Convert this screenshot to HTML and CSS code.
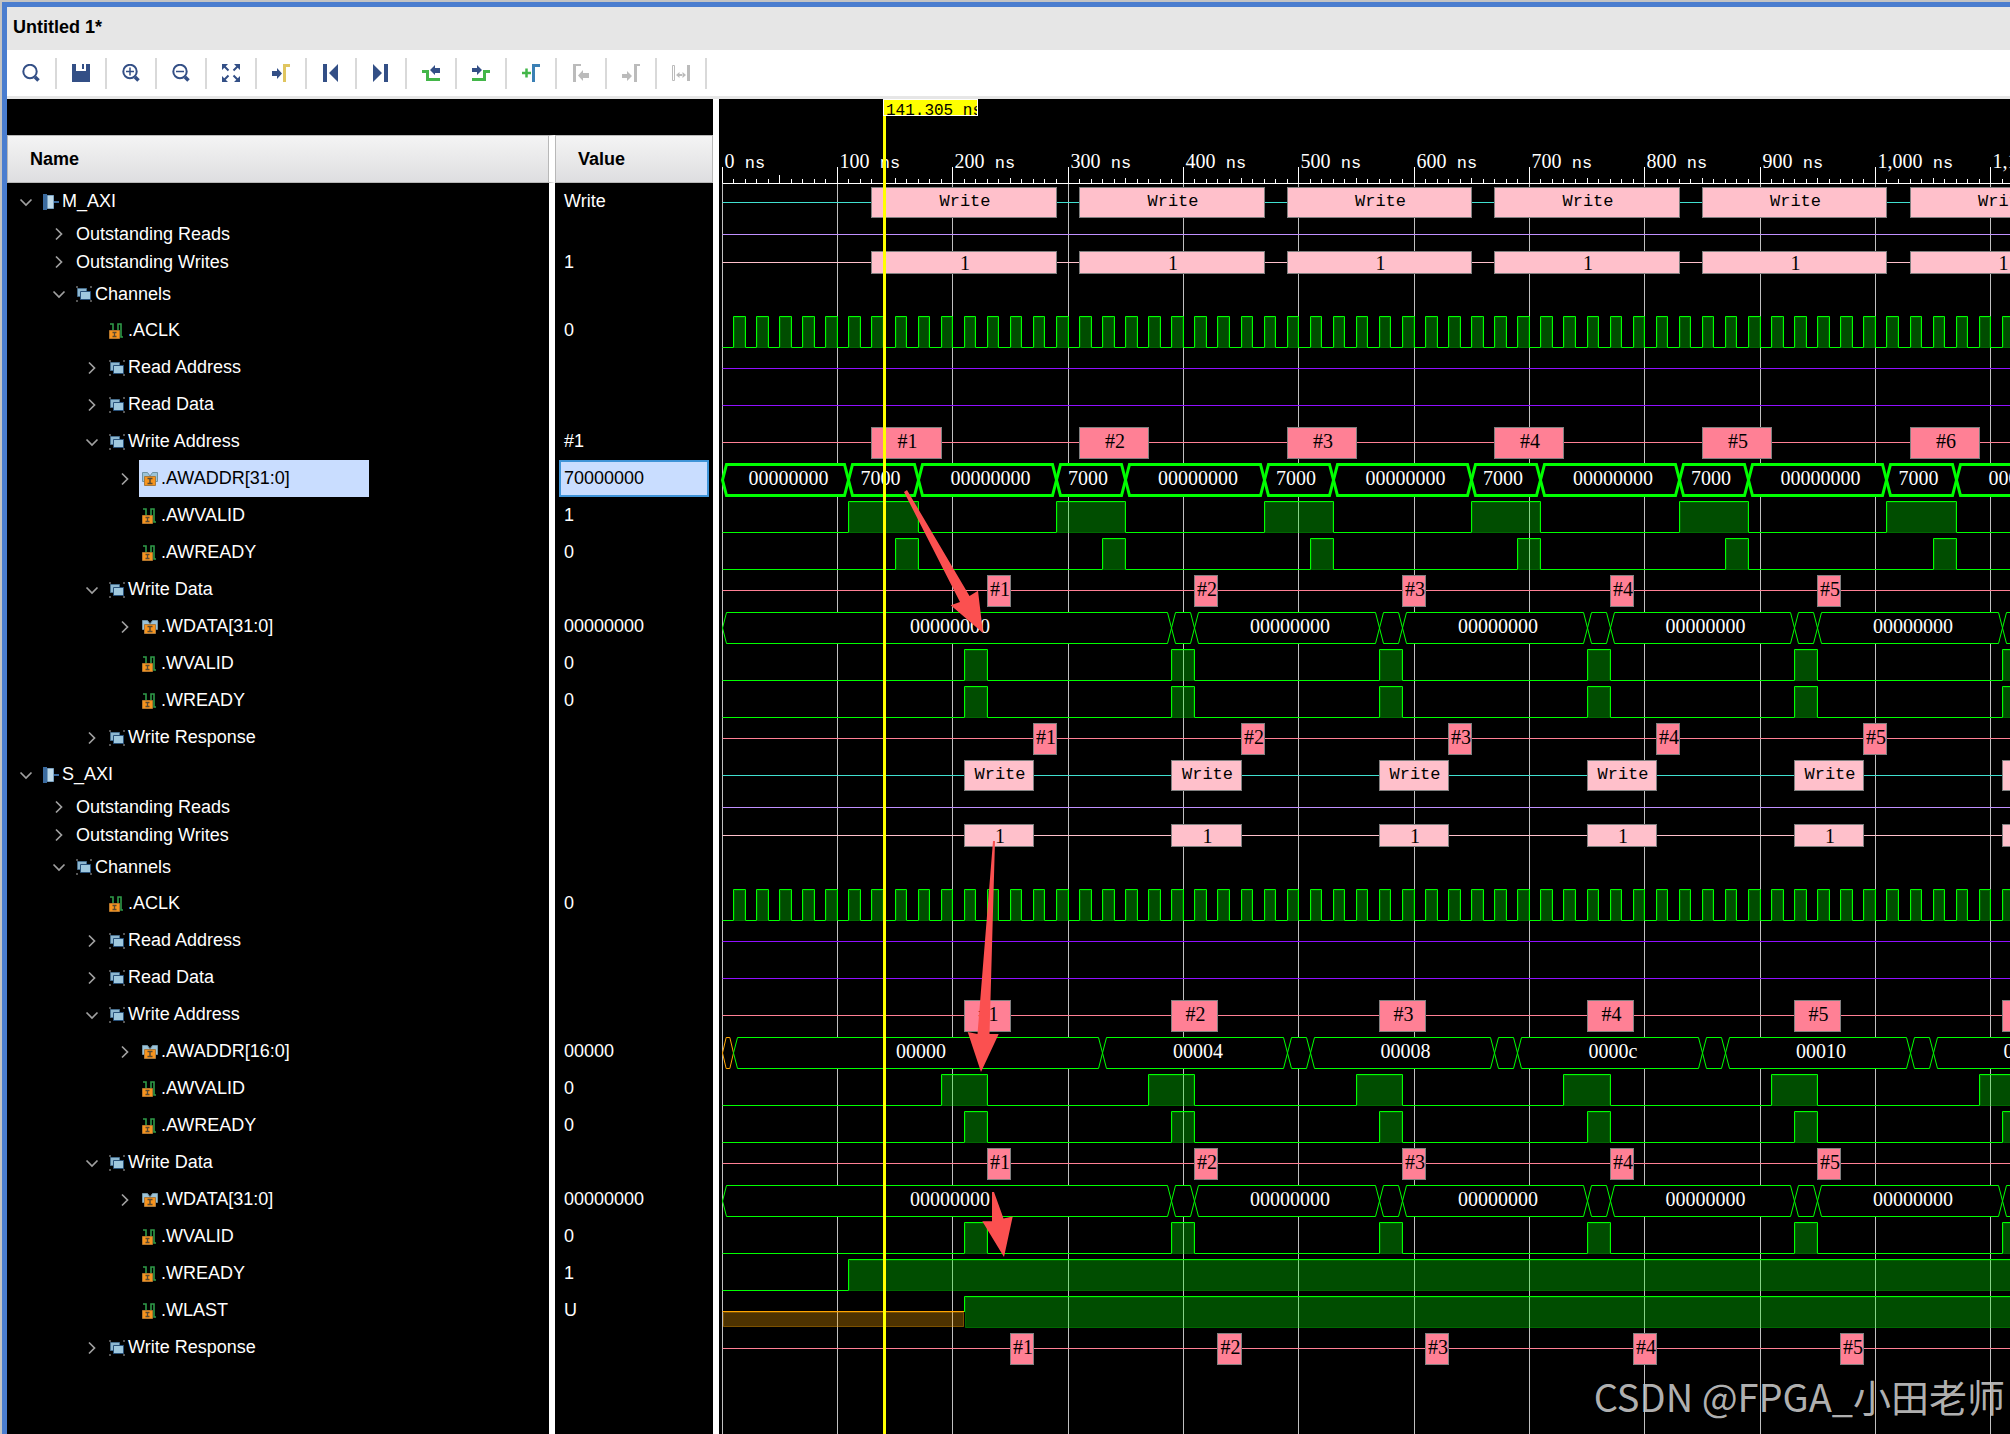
FILE: index.html
```html
<!DOCTYPE html>
<html lang="en">
<head>
    <meta charset="UTF-8">
    <title>Untitled 1*</title>
    <link rel="stylesheet" href="styles.css">
</head>
<body>
    <svg class="icon-defs" aria-hidden="true">
        <symbol id="down" viewBox="0 0 14 14"><path d="M1.5 4.5L7 10l5.5-5.5" fill="none" stroke="#a0a0a0" stroke-width="1.7"/></symbol>
        <symbol id="right" viewBox="0 0 14 14"><path d="M4 1.5L9.500 7 4 12.500" fill="none" stroke="#a0a0a0" stroke-width="1.700"/></symbol>
        <symbol id="iface" viewBox="0 0 16 16">
            <path d="M0 0h4v16H0zM11 7h5v2h-5z" fill="#3b6b9f"/>
            <path d="M4.500 1.500h6v13h-6z" fill="#bfdaea" stroke="#7ba3c4"/>
        </symbol>
        <symbol id="group" viewBox="0 0 16 16">
            <path d="M0 0h2v2H0zM14 0h2v2h-2zM0 14h2v2H0zM14 14h2v2h-2z" fill="#555"/>
            <path d="M1.500 2.500h9v8h-9z" fill="#8db7d0" stroke="#476f8e"/>
            <path d="M4.500 5.500h10v8h-10z" fill="#9fc8de" stroke="#28517a"/>
        </symbol>
        <symbol id="wire" viewBox="0 0 16 16">
            <path d="M1 1h3v7M4 8h5V1h3v13h2" fill="none" stroke="#2f9a48" stroke-width="1.600"/>
            <path d="M.5 7.500h10v8H.5z" fill="#f7941e" stroke="#b5762b"/>
            <path d="M3.500 9.500h4M5.500 9.500v4M3.500 13.500h4" stroke="#5b4a30" stroke-width="1.300"/>
        </symbol>
        <symbol id="bus" viewBox="0 0 16 16">
            <path d="M.5 1.500h5L8 5l2.500-3.500h5v9H.5z" fill="#9cc3d8" stroke="#6f93a5"/>
            <path d="M2.500 5.500h11v9h-11z" fill="#f7941e" stroke="#a87a3f"/>
            <path d="M5.500 7.500h5M8 7.500v5M5.500 12.500h5" stroke="#5b4a30" stroke-width="1.500"/>
        </symbol>
    </svg>

    <div class="window">
        <header class="title-bar">Untitled 1*</header>

        <div class="toolbar">
            <button class="tool" aria-label="Search">
                <svg viewBox="0 0 18 18"><circle cx="8" cy="7.500" r="6.700" fill="none" stroke="#334f86" stroke-width="2"/><path d="M13 13l3.500 3.500" stroke="#334f86" stroke-width="3.500"/></svg>
            </button>
            <button class="tool" aria-label="Save">
                <svg viewBox="0 0 18 18"><path d="M0 0h4v7h10V0h4v18H0z" fill="#334f86"/><path d="M10 0h2v5h-2z" fill="#334f86"/></svg>
            </button>
            <button class="tool" aria-label="Zoom in">
                <svg viewBox="0 0 18 18"><circle cx="8" cy="7.500" r="6.700" fill="none" stroke="#334f86" stroke-width="2"/><path d="M4 7.500h8M8 3.500v8" stroke="#334f86" stroke-width="1.500"/><path d="M13 13l3.500 3.500" stroke="#334f86" stroke-width="3.500"/></svg>
            </button>
            <button class="tool" aria-label="Zoom out">
                <svg viewBox="0 0 18 18"><circle cx="8" cy="7.500" r="6.700" fill="none" stroke="#334f86" stroke-width="2"/><path d="M4 7.500h8" stroke="#334f86" stroke-width="1.500"/><path d="M13 13l3.500 3.500" stroke="#334f86" stroke-width="3.500"/></svg>
            </button>
            <button class="tool" aria-label="Zoom fit">
                <svg viewBox="0 0 18 18"><path d="M0 0h6L0 6zM12 0h6v6zM0 12v6h6zM18 12v6h-6z" fill="#334f86"/><path d="M2 2l4.500 4.500M16 2l-4.500 4.500M2 16l4.500-4.500M16 16l-4.500-4.500" stroke="#334f86" stroke-width="2"/></svg>
            </button>
            <button class="tool" aria-label="Go to cursor">
                <svg viewBox="0 0 18 18"><path d="M0 7h5V4l5 5.500L5 15v-3H0z" fill="#334f86"/><path d="M11 18V0h7v3h-4v15z" fill="#e0c55f"/></svg>
            </button>
            <button class="tool" aria-label="Go to start">
                <svg viewBox="0 0 18 18"><path d="M1 0h4v18H1zM16 0v18L7 9z" fill="#334f86"/></svg>
            </button>
            <button class="tool" aria-label="Go to end">
                <svg viewBox="0 0 18 18"><path d="M12 0h4v18h-4zM1 0v18l9-9z" fill="#334f86"/></svg>
            </button>
            <button class="tool" aria-label="Previous transition">
                <svg viewBox="0 0 18 18"><path d="M0 7.500h5.500v8H18" fill="none" stroke="#43b649" stroke-width="3"/><path d="M8 6l5-5v3h5v5h-5v2z" fill="#334f86"/></svg>
            </button>
            <button class="tool" aria-label="Next transition">
                <svg viewBox="0 0 18 18"><path d="M0 15.500h12.500v-8H18" fill="none" stroke="#43b649" stroke-width="3"/><path d="M10 6L5 1v3H0v4h5v3z" fill="#334f86"/></svg>
            </button>
            <button class="tool" aria-label="Add marker">
                <svg viewBox="0 0 18 18"><path d="M0 9h9M4.500 4.500v9" stroke="#43b649" stroke-width="2.500"/><path d="M10 18V0h8v3h-5v15z" fill="#3a80b5"/></svg>
            </button>
            <button class="tool" aria-label="Previous marker" disabled>
                <svg viewBox="0 0 18 18"><path d="M1 18V0h8v2H4v16zM6 11.500L11 6v3h6v5h-6v3z" fill="#bbb"/></svg>
            </button>
            <button class="tool" aria-label="Next marker" disabled>
                <svg viewBox="0 0 18 18"><path d="M12 18V0h6v2h-3v16zM10 12L5 7v3H0v4h5v3z" fill="#bbb"/></svg>
            </button>
            <button class="tool" aria-label="Swap cursors" disabled>
                <svg viewBox="0 0 18 18"><path d="M.5 1.500h2v15h-2z" fill="none" stroke="#bbb"/><path d="M15 1h3v16h-3zM4 11l3.500-3v6zM14 11l-3.500-3v6zM7 10h4v2H7z" fill="#bbb"/></svg>
            </button>
        </div>

        <main class="viewer">
            <section class="signals">
                <table class="signal-table">
                    <thead>
                        <tr><th class="name-col">Name</th><th class="value-col">Value</th></tr>
                    </thead>
                    <tbody id="signals"></tbody>
                </table>
            </section>

            <section class="wave" id="wave">
                <svg class="grid" id="grid"></svg>
                <svg class="ruler" id="ruler"></svg>
                <div class="traces" id="traces"></div>
                <svg class="overlay" id="overlay"></svg>
                <div class="cursor-label">141.305 ns</div>
                <div class="watermark">CSDN @FPGA_小田老师</div>
            </section>
        </main>
    </div>

    <script src="wave.js"></script>
</body>
</html>
```
FILE: styles.css
```css
* {
    box-sizing: border-box;
}

body {
    margin: 0;
    padding: 2px 0 0 2px;
    min-height: 100vh;
    display: flex;
    flex-direction: column;
    background-color: #c4c4c4;
    font-family: "Liberation Sans", Arial, sans-serif;
    font-size: 18px;
    overflow-x: hidden;
}

.icon-defs {
    display: none;
}

.window {
    flex: 1;
    display: flex;
    flex-direction: column;
    border-top: 5px solid #4a7dcf;
    border-left: 5px solid #4a7dcf;
}

.title-bar {
    height: 43px;
    padding-left: 6px;
    line-height: 40px;
    font-weight: bold;
    background-color: #e6e6e6;
    color: #000;
}

/* Toolbar */
.toolbar {
    display: flex;
    align-items: center;
    height: 49px;
    background-color: #fff;
    border-bottom: 3px solid #e6e6e6;
}

.tool {
    width: 50px;
    height: 31px;
    padding: 0;
    display: flex;
    align-items: center;
    justify-content: center;
    background: none;
    border: none;
    border-right: 2px solid #d9d9d9;
    cursor: pointer;
}

.tool svg {
    width: 18px;
    height: 18px;
}

.viewer {
    flex: 1;
    display: flex;
    background-color: #000;
}

/* Name and value columns */
.signals {
    flex: none;
    width: 706px;
    border-top: 36px solid #000;
    background: linear-gradient(to right, #000 542px, #fff 542px, #fff 548px, #000 548px);
}

.signal-table {
    width: 706px;
    table-layout: fixed;
    border-collapse: separate;
    border-spacing: 0;
    color: #fff;
}

.signal-table th {
    height: 48px;
    padding: 0 0 0 22px;
    text-align: left;
    color: #000;
    border: 1px solid #b8b8b8;
    background: linear-gradient(#f4f4f4, #dedee0);
}

.signal-table .name-col {
    width: 548px;
    background-clip: padding-box;
    border-right: 6px solid #fff;
    box-shadow: inset -1px 0 #b8b8b8;
}

.signal-table td {
    padding: 0;
    white-space: nowrap;
}

.row-main td {
    height: 37px;
}

.row-count td {
    height: 28px;
}

.row-channels td {
    height: 36px;
}

.tree-item {
    display: flex;
    align-items: center;
    height: inherit;
    padding-left: 12px;
}

.level-1 {
    padding-left: 45px;
}

.level-2 {
    padding-left: 78px;
}

.level-3 {
    padding-left: 111px;
}

.toggle {
    width: 14px;
    height: 14px;
    margin-right: 7px;
    padding: 0;
    background: none;
    border: none;
    cursor: pointer;
}

.toggle svg {
    display: block;
    width: 14px;
    height: 14px;
}

.label {
    display: flex;
    align-items: center;
    gap: 3px;
    width: 230px;
    padding-left: 3px;
}

.label svg {
    width: 16px;
    height: 16px;
}

.value {
    display: flex;
    align-items: center;
    height: inherit;
    margin: 0 4px;
    padding-left: 5px;
}

.selected .label,
.selected .value {
    height: 37px;
    background-color: #c9ddff;
    color: #000;
}

.selected .value {
    box-shadow: inset 0 0 0 2px #3f94d8;
}

/* Waveforms */
.wave {
    position: relative;
    flex: 1;
    min-width: 0;
    overflow: hidden;
    border-left: 6px solid #fff;
    background-color: #000;
}

.grid,
.overlay {
    position: absolute;
    top: 0;
    left: 0;
    width: 100%;
    height: 100%;
}

.grid {
    stroke: #c0c0c0;
}

.overlay {
    pointer-events: none;
}

.ruler {
    position: relative;
    display: block;
    width: 100%;
    height: 84px;
    overflow: visible;
    stroke: #fff;
}

.traces {
    position: relative;
}

.trace {
    display: block;
    width: 100%;
}

.wave text {
    font-family: "Liberation Serif", serif;
    font-size: 20px;
    fill: #fff;
    stroke: none;
}

.wave .mono {
    font-family: "Liberation Mono", monospace;
    font-size: 17px;
}

.wave .dark {
    fill: #000;
}

.line {
    fill: none;
    stroke: #00ff00;
}

.high {
    fill: rgba(0, 255, 0, 0.3);
    stroke: rgba(0, 255, 0, 0.3);
}

.bus {
    fill: #000;
    stroke: #00ff00;
}

.bus-bold {
    stroke-width: 3;
}

.bus-unknown {
    stroke: #ffa500;
}

.unknown-fill {
    fill: rgba(255, 165, 0, 0.3);
    stroke: rgba(255, 165, 0, 0.4);
}

.unknown-line {
    stroke: #ffa500;
}

.box {
    stroke: #808080;
}

.cursor-line {
    stroke: #ffff00;
    stroke-width: 3;
}

.arrow {
    fill: #fb5050;
}

.cursor-label {
    position: absolute;
    top: 0;
    left: 164px;
    width: 95px;
    height: 17px;
    padding-left: 2px;
    overflow: hidden;
    white-space: nowrap;
    line-height: 22px;
    font-family: "Liberation Mono", monospace;
    font-size: 16px;
    color: #000;
    background-color: #ffff00;
    border: 1px solid #fff;
}

.watermark {
    position: absolute;
    right: 5px;
    bottom: 10px;
    font-family: "Noto Sans CJK SC", sans-serif;
    font-size: 38px;
    line-height: 56px;
    white-space: nowrap;
    color: rgba(200, 200, 200, 0.9);
}
```
FILE: wave.js
```js
const PX_PER_NS = 1.1534;
const ORIGIN = 3;
const PERIOD = 180;
const RULER_HEIGHT = 84;
const CURSOR = 141.305;

const PINK = "#ffc0cb";
const ROSE = "#ff8095";
const PURPLE = "#9010ff";

const heights = { main: 37, count: 28, channels: 36 };

// kind of trace: box = transaction bar, bit = single wire, bus = vector, flat = idle line
const rows = [
    { name: "M_AXI", level: 0, icon: "iface", open: true, value: "Write", wave: "box", from: 130, to: 290, label: "Write", color: PINK, line: "#40e0d0" },
    { name: "Outstanding Reads", level: 1, type: "count", open: false, wave: "flat", line: "#c090ff" },
    { name: "Outstanding Writes", level: 1, type: "count", open: false, value: "1", wave: "box", from: 130, to: 290, label: "1", color: PINK, line: PINK },
    { name: "Channels", level: 1, type: "channels", icon: "group", open: true },
    { name: ".ACLK", level: 2, icon: "wire", value: "0", wave: "bit", from: 10, to: 20, period: 20 },
    { name: "Read Address", level: 2, icon: "group", open: false, wave: "flat", line: PURPLE },
    { name: "Read Data", level: 2, icon: "group", open: false, wave: "flat", line: PURPLE },
    { name: "Write Address", level: 2, icon: "group", open: true, value: "#1", wave: "box", from: 130, to: 190, color: ROSE, line: ROSE },
    { name: ".AWADDR[31:0]", level: 3, icon: "bus", open: false, value: "70000000", selected: true, wave: "bus", first: 110, gap: 60, idle: "00000000", active: "7000" },
    { name: ".AWVALID", level: 3, icon: "wire", value: "1", wave: "bit", from: 110, to: 170 },
    { name: ".AWREADY", level: 3, icon: "wire", value: "0", wave: "bit", from: 150, to: 170 },
    { name: "Write Data", level: 2, icon: "group", open: true, wave: "box", from: 230, to: 250, color: ROSE, line: ROSE },
    { name: ".WDATA[31:0]", level: 3, icon: "bus", open: false, value: "00000000", wave: "bus", first: 390, gap: 20, idle: "00000000", active: "" },
    { name: ".WVALID", level: 3, icon: "wire", value: "0", wave: "bit", from: 210, to: 230 },
    { name: ".WREADY", level: 3, icon: "wire", value: "0", wave: "bit", from: 210, to: 230 },
    { name: "Write Response", level: 2, icon: "group", open: false, wave: "box", from: 270, to: 290, color: ROSE, line: ROSE },
    { name: "S_AXI", level: 0, icon: "iface", open: true, wave: "box", from: 210, to: 270, label: "Write", color: PINK, line: "#40e0d0" },
    { name: "Outstanding Reads", level: 1, type: "count", open: false, wave: "flat", line: "#c090ff" },
    { name: "Outstanding Writes", level: 1, type: "count", open: false, wave: "box", from: 210, to: 270, label: "1", color: PINK, line: PINK },
    { name: "Channels", level: 1, type: "channels", icon: "group", open: true },
    { name: ".ACLK", level: 2, icon: "wire", value: "0", wave: "bit", from: 10, to: 20, period: 20 },
    { name: "Read Address", level: 2, icon: "group", open: false, wave: "flat", line: PURPLE },
    { name: "Read Data", level: 2, icon: "group", open: false, wave: "flat", line: PURPLE },
    { name: "Write Address", level: 2, icon: "group", open: true, wave: "box", from: 210, to: 250, color: ROSE, line: ROSE },
    { name: ".AWADDR[16:0]", level: 3, icon: "bus", open: false, value: "00000", wave: "address" },
    { name: ".AWVALID", level: 3, icon: "wire", value: "0", wave: "bit", from: 190, to: 230 },
    { name: ".AWREADY", level: 3, icon: "wire", value: "0", wave: "bit", from: 210, to: 230 },
    { name: "Write Data", level: 2, icon: "group", open: true, wave: "box", from: 230, to: 250, color: ROSE, line: ROSE },
    { name: ".WDATA[31:0]", level: 3, icon: "bus", open: false, value: "00000000", wave: "bus", first: 390, gap: 20, idle: "00000000", active: "" },
    { name: ".WVALID", level: 3, icon: "wire", value: "0", wave: "bit", from: 210, to: 230 },
    { name: ".WREADY", level: 3, icon: "wire", value: "1", wave: "bit", from: 110, to: 100000, period: 100000 },
    { name: ".WLAST", level: 3, icon: "wire", value: "U", wave: "last", from: 210 },
    { name: "Write Response", level: 2, icon: "group", open: false, wave: "box", from: 250, to: 270, color: ROSE, line: ROSE }
];

const wave = document.getElementById("wave");
let width = 0;

function x(t) {
    return Math.floor(ORIGIN + t * PX_PER_NS) + 0.5;
}

function visible(t) {
    return x(t) < width;
}

// labels whose left edge is past the panel are left out
function text(cx, y, content, cls) {
    if (cx - content.length * 5 > width) {
        return "";
    }
    return `<text x="${cx}" y="${y}" text-anchor="middle" class="${cls || ""}">${content}</text>`;
}

function flat(y, color) {
    return `<path d="M${x(0)} ${y}H${width}" stroke="${color}"/>`;
}

function boxTrace(row) {
    const small = row.type === "count";
    const top = small ? 3.5 : 4.5;
    const bottom = small ? 25.5 : (row.label ? 34.5 : 35.5);
    const base = small ? 22 : (row.label ? 23 : 25);
    let out = flat(small ? 14.5 : 19.5, row.line);
    for (let i = 0; visible(row.from + i * PERIOD); i++) {
        const x1 = x(row.from + i * PERIOD);
        const x2 = x(row.to + i * PERIOD);
        out += `<rect class="box" x="${x1}" y="${top}" width="${x2 - x1}" height="${bottom - top}" fill="${row.color}"/>`;
        out += text((x1 + x2) / 2 + 1, base, row.label || "#" + (i + 1), row.label === "Write" ? "mono dark" : "dark");
    }
    return out;
}

function bitTrace(row) {
    const period = row.period || PERIOD;
    let out = "";
    let d = `M${x(0)} 35.5`;
    for (let i = 0; visible(row.from + i * period); i++) {
        const x1 = x(row.from + i * period);
        const x2 = Math.min(x(row.to + i * period), width + 20);
        out += `<rect class="high" x="${x1 + 1}" y="5.5" width="${x2 - x1 - 2}" height="30"/>`;
        d += `H${x1}V4.5H${x2}V35.5M${x2} 35.5`;
    }
    return out + `<path class="line" d="${d}H${width + 20}"/>`;
}

function busCell(t1, t2, label, cls) {
    if (!visible(t1)) {
        return "";
    }
    const x1 = x(t1);
    const x2 = x(t2);
    const s = Math.min(4, (x2 - x1) / 3);
    let out = `<path class="bus ${cls || ""}" d="M${x1} 20L${x1 + s} 4.5H${x2 - s}L${x2} 20L${x2 - s} 35.500H${x1 + s}Z"/>`;
    if (label) {
        const shift = label.length < 5 ? -3 : 3;
        out += text((x1 + x2) / 2 + shift, 25, label);
    }
    return out;
}

function busTrace(row) {
    const cls = row.selected ? "bus-bold" : "";
    let out = busCell(0, row.first, row.idle, cls);
    for (let t = row.first; visible(t); t += PERIOD) {
        out += busCell(t, t + row.gap, row.active, cls);
        out += busCell(t + row.gap, t + PERIOD, row.idle, cls);
    }
    return out;
}

function addressTrace() {
    let out = busCell(0, 10, "", "bus-unknown") + busCell(10, 330, "00000") + busCell(330, 490, "00004");
    for (let t = 490, addr = 8; visible(t); t += PERIOD, addr += 4) {
        out += busCell(t, t + 20, "");
        out += busCell(t + 20, t + PERIOD, addr.toString(16).padStart(5, "0"));
    }
    return out;
}

function lastTrace(row) {
    const x0 = x(0);
    const x1 = x(row.from);
    return `<rect class="unknown-fill" x="${x0 + 1}" y="20.5" width="${x1 - x0 - 2}" height="14"/>
        <path class="unknown-line" d="M${x0} 19.5H${x1}"/>
        <rect class="high" x="${x1 + 1}" y="5.5" width="${width}" height="30"/>
        <path class="line" d="M${x1} 20V4.500H${width + 1}"/>`;
}

function trace(row) {
    switch (row.wave) {
        case "box": return boxTrace(row);
        case "bit": return bitTrace(row);
        case "bus": return busTrace(row);
        case "address": return addressTrace();
        case "last": return lastTrace(row);
        case "flat": return flat(row.type === "count" ? 14.5 : 19.5, row.line);
        default: return "";
    }
}

function drawTable() {
    document.getElementById("signals").innerHTML = rows.map(row => {
        const toggle = row.open === undefined
            ? `<span class="toggle"></span>`
            : `<button class="toggle" aria-label="Toggle ${row.name}"><svg><use href="#${row.open ? "down" : "right"}"/></svg></button>`;
        const icon = row.icon ? `<svg><use href="#${row.icon}"/></svg>` : "";
        return `<tr class="row-${row.type || "main"} ${row.selected ? "selected" : ""}">
            <td><div class="tree-item level-${row.level}">${toggle}<span class="label">${icon}${row.name}</span></div></td>
            <td><div class="value">${row.value || ""}</div></td>
        </tr>`;
    }).join("");
}

function drawWave() {
    width = wave.clientWidth;
    let grid = "";
    let ruler = `<path d="M${x(0)} 84.5H${width}"/>`;
    for (let t = 0; visible(t); t += 10) {
        const px = x(t);
        let top = 80;
        if (t % 100 === 0) {
            top = 68;
            grid += `<path d="M${px} ${RULER_HEIGHT}V4000"/>`;
            ruler += `<text x="${px + 2}" y="69">${t.toLocaleString("en-US")}<tspan class="mono"> ns</tspan></text>`;
        } else if (t % 50 === 0) {
            top = t === 50 ? 76 : 79;
        }
        ruler += `<path d="M${px} ${top}V84"/>`;
    }
    document.getElementById("grid").innerHTML = grid;
    document.getElementById("ruler").innerHTML = ruler;

    document.getElementById("traces").innerHTML = rows.map(row =>
        `<svg class="trace" height="${heights[row.type || "main"]}">${trace(row)}</svg>`
    ).join("");

    document.getElementById("overlay").innerHTML = `
        <path class="cursor-line" d="M${x(CURSOR)} 16V4000"/>
        <path class="arrow" d="M185 393L188 391L250.500 497L259 491.700L264 534L231.700 506.300L241 503Z"/>
        <path class="arrow" d="M274 742L276 742L270.500 935L279.700 935L262 973L248.700 933L258.500 935Z"/>
        <path class="arrow" d="M273 1093L275 1093L284.500 1119.500L293.700 1117.500L285 1158L263.300 1122.300L273 1122.300Z"/>`;
}

drawTable();
drawWave();
window.addEventListener("resize", drawWave);
```
